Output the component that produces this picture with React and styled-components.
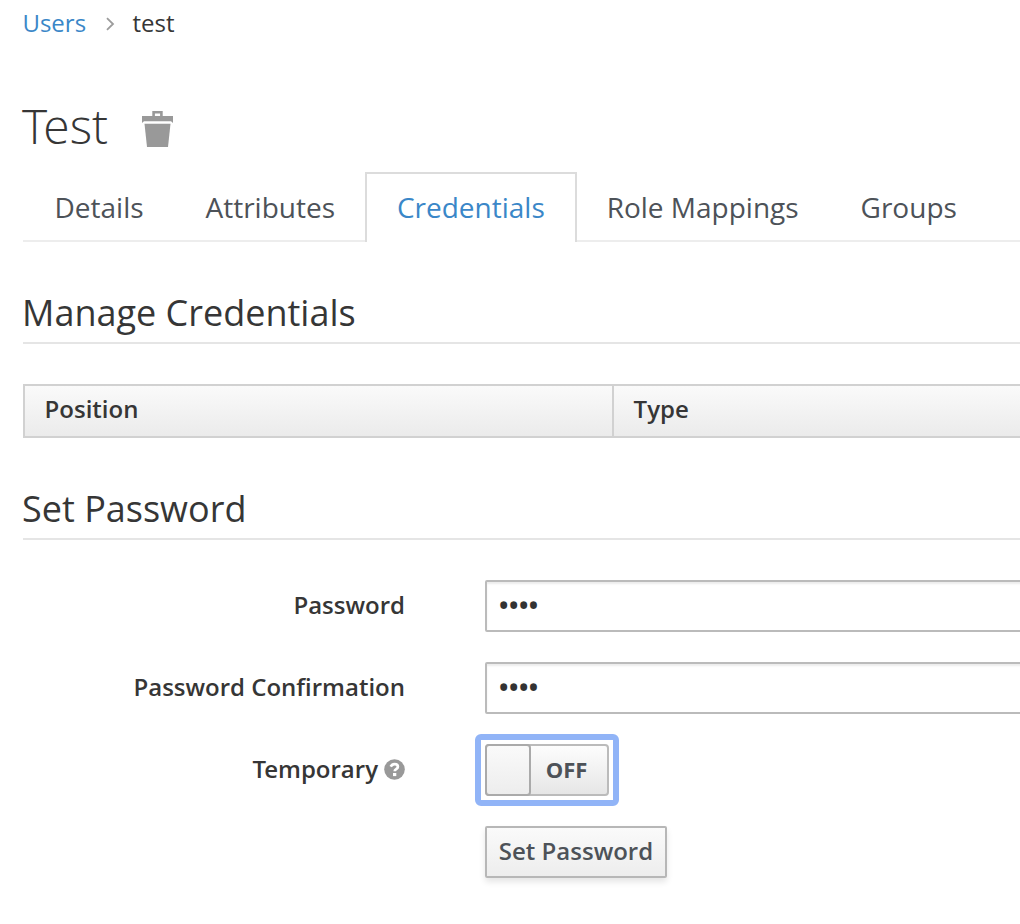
import React from "react";
import styled, { createGlobalStyle } from "styled-components";

const GlobalStyle = createGlobalStyle`
  *, *::before, *::after { box-sizing: border-box; }
  html, body { margin: 0; background: #fff; overflow: hidden; }
  body {
    font-family: "Open Sans", "Noto Sans", sans-serif;
    font-size: 24px;
    line-height: 40px;
    color: #363636;
  }
`;

const Page = styled.main`
  height: 924px;
  padding-left: 23px;
  overflow: hidden;
`;

const Breadcrumb = styled.nav`
  display: flex;
  align-items: center;
  height: 46px;
  margin-left: -0.6px;
  a { color: #3a87c8; text-decoration: none; }
  svg { margin: 2px 18px 0 19.5px; }
`;

const TitleBar = styled.header`
  display: flex;
  align-items: center;
  height: 126px;
  padding-top: 34px;
  svg { margin-top: 5px; }
`;

const Title = styled.h1`
  margin: 0 0 0 -1px;
  width: 120px;
  font-size: 48px;
  font-weight: 300;
  line-height: 60px;
  &::first-letter { letter-spacing: -0.08em; }
`;

const Tabs = styled.ul`
  display: flex;
  width: 1200px;
  height: 70px;
  margin: 0;
  padding: 0;
  list-style: none;
  box-shadow: inset 0 -2px #ededed;
`;

const Tab = styled.li`
  height: 70px;
  padding: 15px 30px 0;
  border: 2px solid ${(p) => (p.$active ? "#dcdcdc" : "transparent")};
  border-bottom: 0;
  background: ${(p) => (p.$active ? "#fff" : "transparent")};
  color: ${(p) => (p.$active ? "#3a87c8" : "#4d5258")};
  font-size: 28px;
  line-height: 36px;
  white-space: nowrap;
  margin-right: -2.1px;
  &:first-child { margin-left: -0.5px; }
`;

const Heading = styled.h2`
  margin: 0;
  height: ${(p) => p.$height}px;
  display: flex;
  align-items: flex-end;
  padding-bottom: 4px;
  border-bottom: 2px solid #e5e5e5;
  font-size: 36px;
  font-weight: 400;
  line-height: 50px;
  text-indent: -1px;
`;

const TableHead = styled.div`
  display: grid;
  grid-template-columns: 587px 700px;
  width: 1291px;
  height: 54px;
  margin-top: 40px;
  border: 2px solid #d1d1d1;
  background: linear-gradient(#fafafa, #ebebeb);
`;

const HeadCell = styled.div`
  padding: 3px 19.6px 0;
  line-height: 40px;
  font-weight: 600;
  & + & { border-left: 2px solid #d1d1d1; }
`;

const Form = styled.form`
  display: flex;
  flex-direction: column;
  gap: 30px;
  margin-top: 40px;
`;

const Row = styled.div`
  display: grid;
  grid-template-columns: 382px 760px;
  column-gap: 80px;
  height: 52px;
`;

const Label = styled.label`
  display: flex;
  justify-content: flex-end;
  align-items: center;
  gap: 6px;
  height: 50px;
  font-weight: 600;
`;

const KernedText = styled.span`
  display: inline-block;
  &::first-letter { letter-spacing: -0.08em; }
`;

const PasswordInput = styled.input`
  width: 760px;
  height: 52px;
  padding: 0 10.6px 4px;
  border: 2px solid #bbb;
  border-radius: 2px;
  box-shadow: inset 0 2px 2px rgba(3, 3, 3, 0.075);
  color: #333;
  font: 33px/44px "Open Sans", sans-serif;
  letter-spacing: -2.5px;
  outline: 0;
`;

const Switch = styled.button`
  position: relative;
  display: flex;
  width: 124px;
  height: 52px;
  padding: 0;
  border: 2px solid #bbb;
  border-radius: 4px;
  background: linear-gradient(#fdfdfd, #e6e6e6);
  outline: 0;
  &::after {
    content: "";
    position: absolute;
    inset: -12px;
    border: 6px solid #91b4f7;
    border-radius: 6px;
  }
`;

const Knob = styled.span`
  width: 46px;
  height: 52px;
  margin: -2px 0 0 -2px;
  border: 2px solid #aaa;
  border-radius: 4px;
  background: linear-gradient(#fafafa, #ededed);
`;

const SwitchText = styled.span`
  flex: 1;
  padding-right: 5px;
  color: #4d5258;
  font: 700 22px/46px "Open Sans", sans-serif;
  text-align: center;
`;

const Submit = styled.button`
  width: 182px;
  height: 52px;
  padding: 0 0 2px;
  border: 2px solid #b7b7b7;
  border-radius: 2px;
  background: linear-gradient(#fafafa, #ededed);
  box-shadow: 0 4px 6px rgba(3, 3, 3, 0.1);
  color: #4d5258;
  font: 600 24px/46px "Open Sans", sans-serif;
  white-space: nowrap;
`;

const Chevron = () => (
  <svg width="9" height="14" viewBox="0 0 9 14" fill="none" stroke="#9c9c9c" strokeWidth="1.8">
    <path d="M1 1.2 7 7 1 12.8" />
  </svg>
);

const Trash = () => (
  <svg width="32" height="38" viewBox="0 0 32 38" fill="#999">
    <path fillRule="evenodd" d="M10.3 1h10.4v5H31v7l-2-1.8H2L0 13V6h10.3zm2.6 2.6V6h5.2V3.6z" />
    <path d="M2.5 13.8h26L26 37H5z" />
  </svg>
);

const Help = () => (
  <svg width="21" height="21" viewBox="0 0 21 21">
    <circle cx="10.5" cy="10.5" r="10.3" fill="#999" />
    <path d="M6.7 7.7c.9-1.8 2.2-2.6 3.9-2.6 2 0 3.3 1.1 3.3 2.7 0 2.5-3.2 2.3-3.2 4.4" fill="none" stroke="#fff" strokeWidth="2.7" />
    <path d="M9 14h3.3v3.1H9z" fill="#fff" />
  </svg>
);

const tabs = ["Details", "Attributes", "Credentials", "Role Mappings", "Groups"];

export default function App() {
  return (
    <Page>
      <GlobalStyle />
      <Breadcrumb>
        <a>Users</a>
        <Chevron />
        <span>test</span>
      </Breadcrumb>
      <TitleBar>
        <Title>Test</Title>
        <Trash />
      </TitleBar>
      <Tabs>
        {tabs.map((name) => (
          <Tab key={name} $active={name === "Credentials"}>{name}</Tab>
        ))}
      </Tabs>
      <Heading $height={102}>Manage Credentials</Heading>
      <TableHead>
        <HeadCell>Position</HeadCell>
        <HeadCell>Type</HeadCell>
      </TableHead>
      <Heading $height={102}>Set Password</Heading>
      <Form>
        <Row>
          <Label htmlFor="password">Password</Label>
          <PasswordInput id="password" type="password" defaultValue="test" />
        </Row>
        <Row>
          <Label htmlFor="confirmation">Password Confirmation</Label>
          <PasswordInput id="confirmation" type="password" defaultValue="test" />
        </Row>
        <Row>
          <Label as="div"><KernedText>Temporary</KernedText><Help /></Label>
          <Switch type="button">
            <Knob />
            <SwitchText>OFF</SwitchText>
          </Switch>
        </Row>
        <Row>
          <span />
          <Submit type="button">Set Password</Submit>
        </Row>
      </Form>
    </Page>
  );
}
